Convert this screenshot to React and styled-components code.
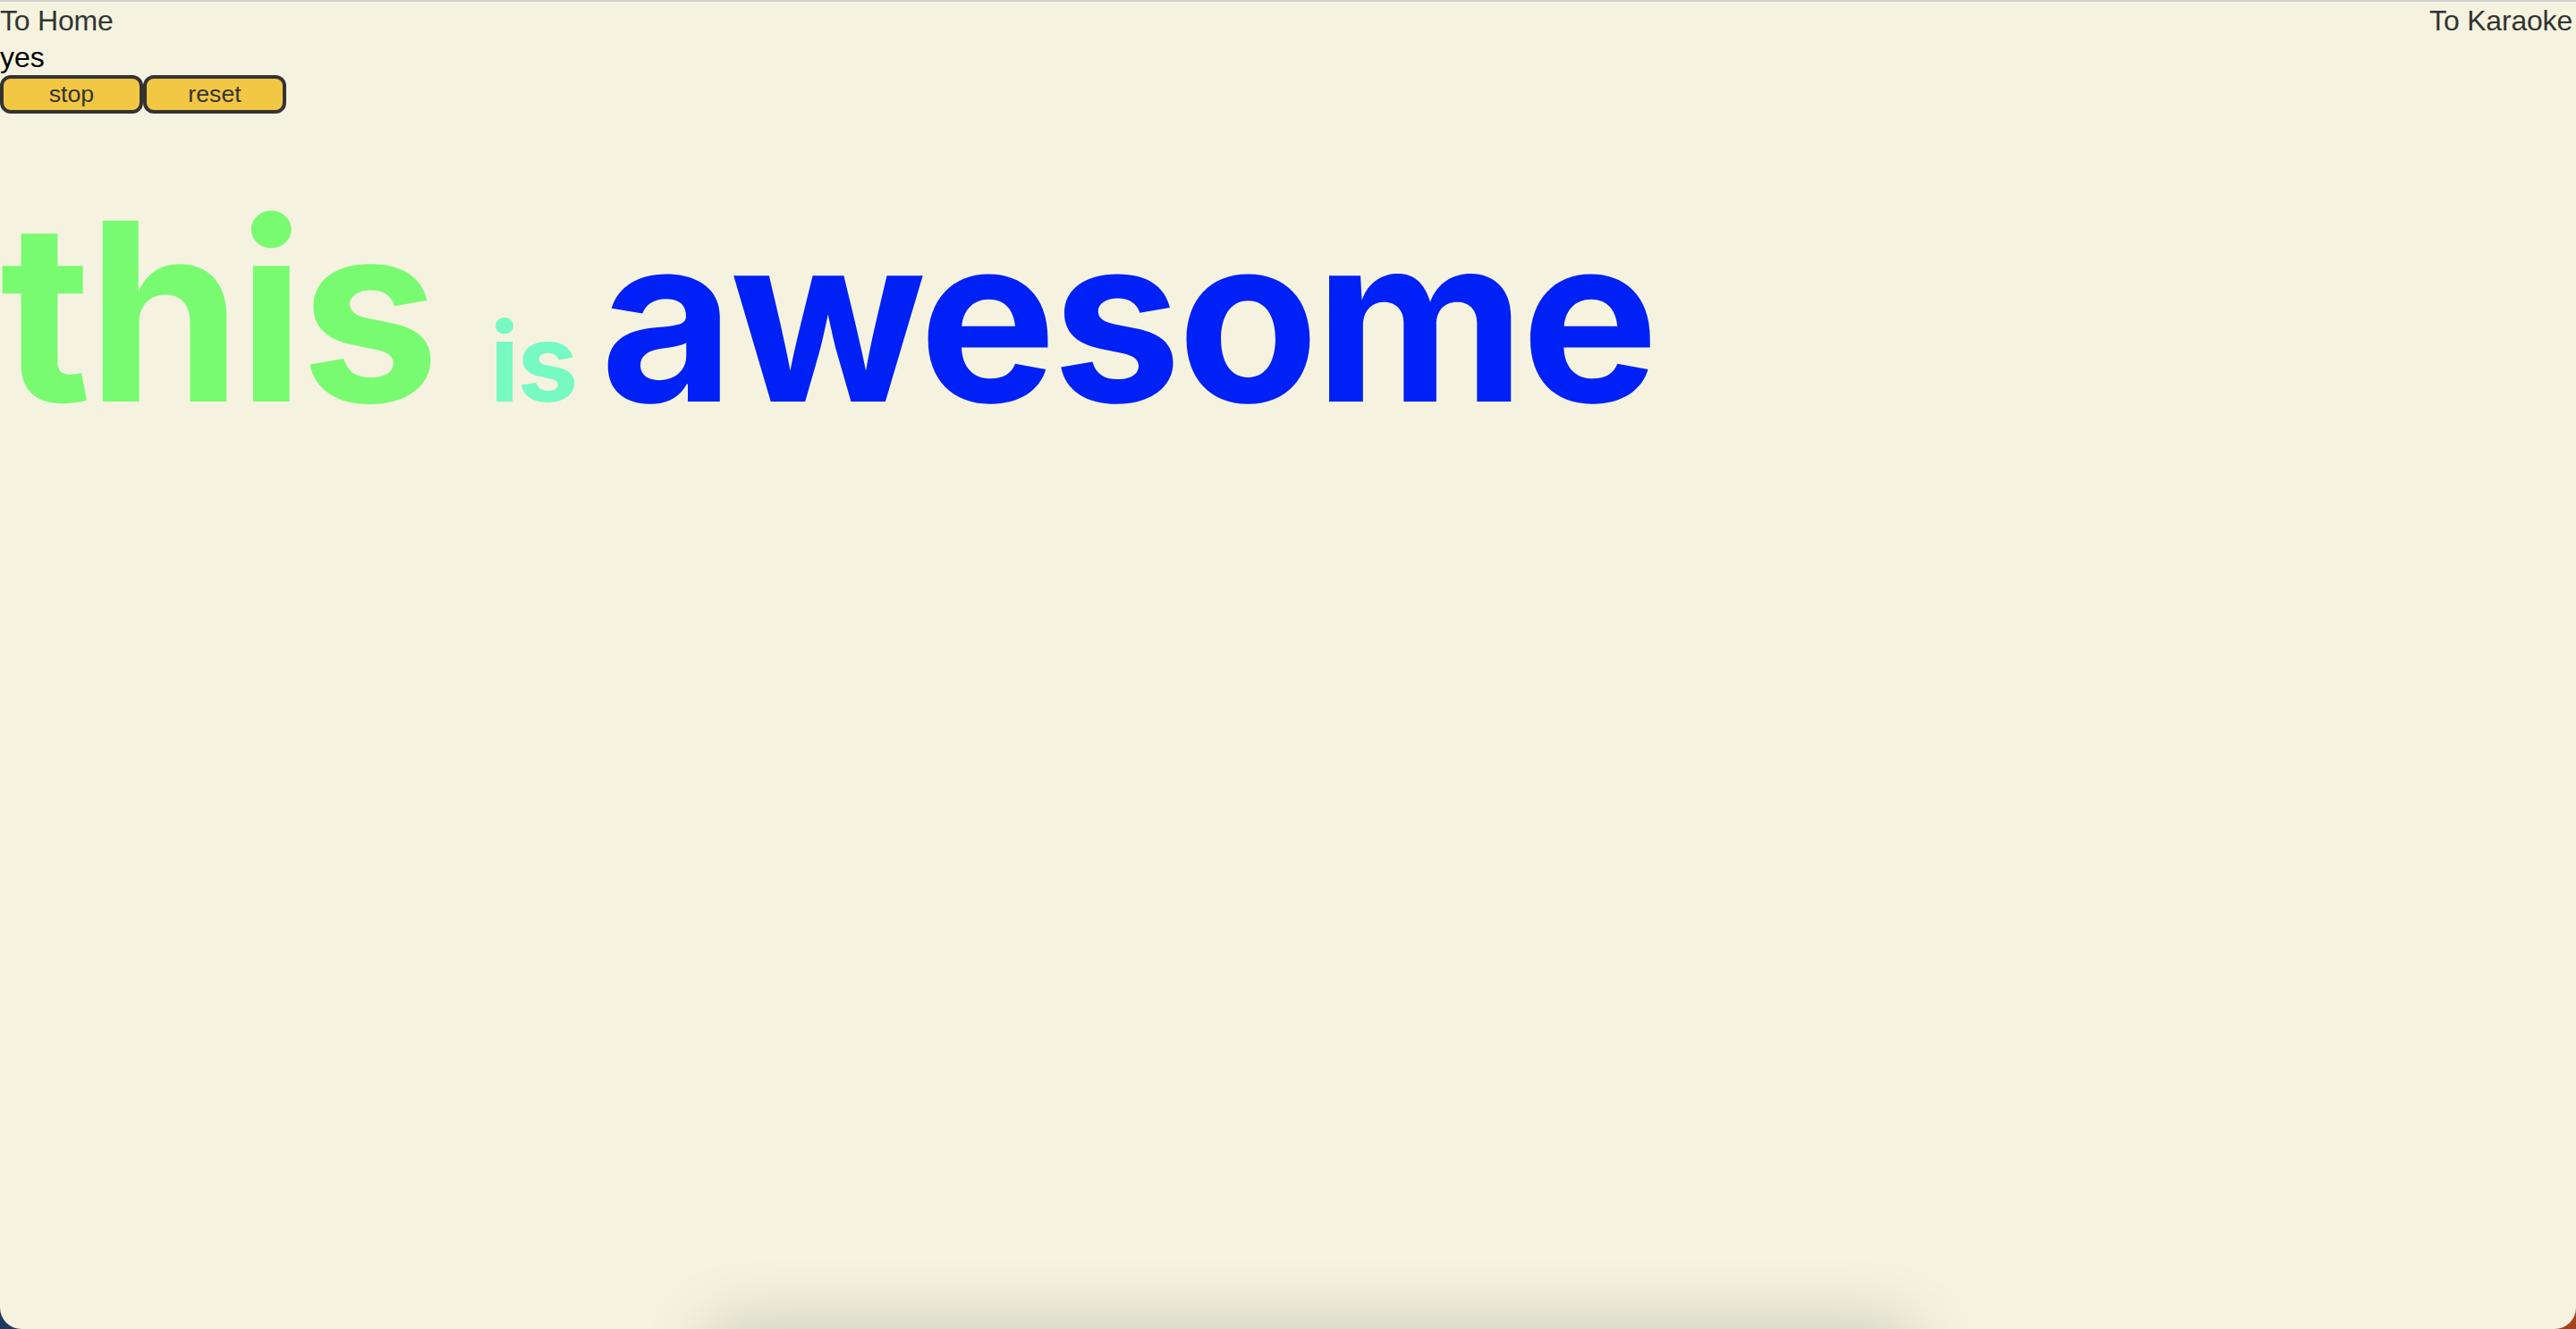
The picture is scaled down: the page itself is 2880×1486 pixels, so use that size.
import React from "react";
import styled, { createGlobalStyle } from "styled-components";

const GlobalStyle = createGlobalStyle`
  html {
    background: linear-gradient(90deg, #1c3a5d 0%, #5b3d3d 50%, #a4421c 100%);
  }
  body {
    margin: 0;
    font-family: "Liberation Sans", Arial, sans-serif;
  }
`;

const Page = styled.div`
  position: relative;
  box-sizing: border-box;
  height: 1486px;
  overflow: hidden;
  background: #f5f3df;
  border-top: 2px solid #d3d3d3;
  border-radius: 0 0 24px 24px;
`;

const Nav = styled.nav`
  display: flex;
  justify-content: space-between;
  align-items: center;
  height: 43px;
  padding-right: 4px;
  font-size: 32px;
  letter-spacing: -0.2px;
`;

const NavLink = styled.a`
  color: #333;
  text-decoration: none;
  cursor: pointer;
`;

const Status = styled.div`
  font-size: 32px;
  line-height: 39px;
  color: #000;
`;

const Controls = styled.div`
  display: flex;
`;

const Button = styled.button`
  box-sizing: border-box;
  width: 160px;
  height: 43px;
  padding: 0;
  background: #f2c744;
  border: 4px solid #333;
  border-radius: 12px;
  color: #333;
  font-family: "Liberation Sans", Arial, sans-serif;
  font-size: 26.7px;
  line-height: 1;
  cursor: pointer;
`;

const Lyrics = styled.div`
  margin-top: 82px;
  font-family: Inter, "Noto Sans", sans-serif;
  font-weight: 700;
  line-height: 1;
  white-space: nowrap;
`;

const Word = styled.span`
  font-size: ${(p) => p.$size}px;
  color: ${(p) => p.$color};
  letter-spacing: -0.018em;
`;

const DockShadow = styled.div`
  position: absolute;
  left: 795px;
  width: 1340px;
  bottom: -100px;
  height: 100px;
  box-shadow: 0 0 80px rgba(0, 0, 0, 0.2);
`;

const words = [
  { text: "this", size: 278, color: "#79fb71" },
  { text: "is", size: 122, color: "#77f9c3" },
  { text: "awesome", size: 258, color: "#0021f5" },
];

const App = () => {
  return (
    <>
      <GlobalStyle />
      <Page>
        <Nav>
          <NavLink>To Home</NavLink>
          <NavLink>To Karaoke</NavLink>
        </Nav>
        <Status>yes</Status>
        <Controls>
          <Button>stop</Button>
          <Button>reset</Button>
        </Controls>
        <Lyrics>
          {words.map((w, i) => (
            <Word key={i} $size={w.size} $color={w.color}>
              {w.text}{" "}
            </Word>
          ))}
        </Lyrics>
        <DockShadow />
      </Page>
    </>
  );
};

export default App;
